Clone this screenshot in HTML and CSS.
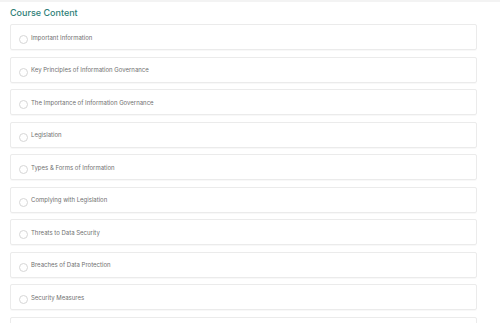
FILE: index.html
```html
<!DOCTYPE html>
<html lang="en">
<head>
  <meta charset="UTF-8" />
  <meta name="viewport" content="width=device-width, initial-scale=1.0"/>
  <title>Course Content</title>
  <link rel="stylesheet" href="styles.css">
</head>
<body>
  <div class="top-strip"></div>

  <div class="content">
    <h2 class="section-title">Course Content</h2>

    <ul class="lesson-list">
      <li class="lesson"><span class="check"></span>Important Information</li>
      <li class="lesson"><span class="check"></span>Key Principles of Information Governance</li>
      <li class="lesson"><span class="check"></span>The Importance of Information Governance</li>
      <li class="lesson"><span class="check"></span>Legislation</li>
      <li class="lesson"><span class="check"></span>Types &amp; Forms of Information</li>
      <li class="lesson"><span class="check"></span>Complying with Legislation</li>
      <li class="lesson"><span class="check"></span>Threats to Data Security</li>
      <li class="lesson"><span class="check"></span>Breaches of Data Protection</li>
      <li class="lesson"><span class="check"></span>Security Measures</li>
      <li class="lesson"></li>
    </ul>
  </div>
</body>
</html>
```

FILE: styles.css
```css
:root {
  --title-color: #2f7f78;
  --text-color: #707070;
  --border-color: #ebebeb;
  --radius: 2px;
}

html, body {
  overflow: hidden;
}

body {
  margin: 0;
  width: 500px;
  font-family: 'Inter', 'Noto Sans', sans-serif;
  background: #fff;
}

.top-strip {
  height: 2px;
  background: #f3f3f3;
}

.content {
  width: 467px;
  padding-left: 10px;
}

.section-title {
  margin: 5px 0 0;
  height: 17px;
  line-height: 11px;
  font-size: 9px;
  font-weight: 500;
  color: var(--title-color);
}

.lesson-list {
  list-style: none;
  margin: 0;
  padding: 0;
  display: flex;
  flex-direction: column;
  gap: 6.5px;
}

.lesson {
  height: 26px;
  box-sizing: border-box;
  display: flex;
  align-items: center;
  gap: 3px;
  padding-left: 8px;
  border: 1px solid var(--border-color);
  border-radius: var(--radius);
  box-shadow: 0 1px 1px rgba(0, 0, 0, 0.03);
  font-size: 6px;
  color: var(--text-color);
}

.check {
  width: 7px;
  height: 7px;
  margin-top: 5px;
  border: 1px solid #d6d6d6;
  border-radius: 50%;
  flex-shrink: 0;
}
```
